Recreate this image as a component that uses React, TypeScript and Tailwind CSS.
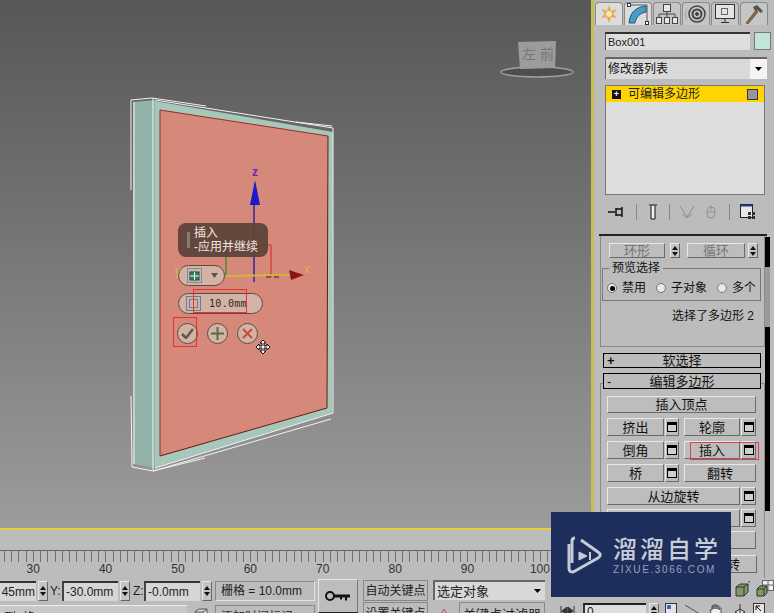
import React from "react";

const cjk = { fontFamily: '"Liberation Sans", "Noto Sans CJK SC", sans-serif' };

function Scene() {
  return (
    <svg className="absolute inset-0" width="591" height="529" viewBox="0 0 591 529">
      {/* side + rim */}
      <polygon points="133,102 155,100 155,468 133,464" fill="#93b3a8" />
      <polygon points="155,101 333,132 332,413 155,468" fill="#a6c7b9" />
      <polygon points="160,110 328,136 327,408 160,456" fill="#d6897a" />
      <polyline points="160,456 160,110 328,136" fill="none" stroke="#9c2c20" strokeWidth="1" />
      <polyline points="328,136 327,408 160,456" fill="none" stroke="#5e1e14" strokeWidth="1" />
      {/* selection outline */}
      <g fill="none" stroke="#f2f2f2" strokeWidth="1">
        <polyline points="131,190 131,100 152,98 206,106" />
        <line x1="134" y1="102" x2="134" y2="464" />
        <line x1="153" y1="98" x2="153" y2="470" />
        <polyline points="155,100 333,128 333,413 155,468" />
        <polyline points="131,396 132,467 153,471 205,458" />
        <polyline points="153,471 331,419" />
        <line x1="296" y1="122" x2="332" y2="126" />
      </g>
      {/* gizmo */}
      <line x1="254" y1="205" x2="254" y2="282" stroke="#2a2a8c" strokeWidth="1.5" />
      <polygon points="255,180 250,205 260,205" fill="#1a1ac8" />
      <polyline points="232,245 271,245 271,277" fill="none" stroke="#d62020" />
      <line x1="226" y1="250" x2="226" y2="276" stroke="#4f8a3a" strokeWidth="1.5" />
      <line x1="180" y1="275" x2="226" y2="275" stroke="#5aa88c" strokeWidth="2" />
      <line x1="226" y1="276" x2="290" y2="275" stroke="#d8b040" strokeWidth="2" />
      <polygon points="304,275 289,270 291,280" fill="#8c1414" />
      <path d="M266 277h5M274 277h5" stroke="#222" />
      {/* viewcube */}
      <ellipse cx="537" cy="72" rx="36" ry="5" fill="#4e4e4e" stroke="#a0a0a0" strokeWidth="1.500" />
      <polygon points="518,42 556,41 555,68 520,69" fill="#9c9c9c" />
      {/* move cursor */}
      <g stroke="#111" fill="#fff" strokeWidth="1">
        <path d="M263 340l3 3h-2v3h3v-2l3 3-3 3v-2h-3v3h2l-3 3-3-3h2v-3h-3v2l-3-3 3-3v2h3v-3h-2z" />
      </g>
    </svg>
  );
}

function Caddy() {
  return (
    <>
      <span className="absolute left-[252px] top-[166px] text-[12px] font-bold leading-none text-[#6a2ab0]">z</span>
      <span className="absolute left-[304px] top-[263px] text-[12px] leading-none text-[#e0b050]">x</span>
      <span className="absolute left-[175px] top-[265px] text-[12px] leading-none text-[#d8c050]">y</span>
      <span className="absolute left-[522px] top-[47px] text-[14px] leading-none text-[#767676]" style={cjk}>左</span>
      <span className="absolute left-[540px] top-[47px] text-[14px] leading-none text-[#767676]" style={cjk}>前</span>

      <div className="absolute left-[178px] top-[223px] flex h-[34px] w-[90px] items-center rounded-lg bg-[#5e433a]/95 pl-[9px]">
        <div className="mr-[4px] h-[16px] w-[3px] bg-[#8a7a72]" />
        <div className="text-[12px] leading-[14px] text-[#f0e8e0]" style={cjk}>
          <div>插入</div>
          <div>-应用并继续</div>
        </div>
      </div>

      <div className="absolute left-[178px] top-[265px] flex h-[21px] w-[47px] items-center gap-[9px] rounded-full border border-[#5e4a40] bg-[#d3b3a5] pl-[8px]">
        <svg width="15" height="15" viewBox="0 0 15 15">
          <rect x="0.5" y="0.5" width="14" height="14" fill="none" stroke="#7a8ca8" />
          <rect x="3" y="4" width="9" height="8" fill="#3f7f66" stroke="#244" />
          <path d="M7.5 4v8M3 8h9" stroke="#dfe" />
        </svg>
        <svg width="7" height="5" viewBox="0 0 7 5"><path d="M0 0h7L3.500 5z" fill="#5c5048" /></svg>
      </div>

      <div className="absolute left-[178px] top-[293px] flex h-[21px] w-[85px] items-center rounded-full border border-[#5e4a40] bg-[#d3b3a5] pl-[7px]">
        <svg width="15" height="15" viewBox="0 0 15 15">
          <rect x="0.500" y="0.500" width="14" height="14" fill="none" stroke="#6a7c98" />
          <rect x="3.500" y="3.500" width="8" height="8" fill="none" stroke="#6a7c98" />
        </svg>
        <span className="ml-[8px] text-[10px] leading-none tracking-[0.3px] text-[#2a2a2a]" style={{ fontFamily: '"DejaVu Sans Mono", monospace' }}>10.0mm</span>
      </div>

      <div className="absolute left-[177px] top-[323px] flex gap-[9px]">
        <div className="flex h-[21px] w-[21px] items-center justify-center rounded-full border border-[#5e4a40] bg-[#d3b3a5]">
          <svg width="13" height="11" viewBox="0 0 13 11"><path d="M1 6l4 4 7-9" fill="none" stroke="#5c5a48" strokeWidth="2.500" /></svg>
        </div>
        <div className="flex h-[21px] w-[21px] items-center justify-center rounded-full border border-[#5e4a40] bg-[#d3b3a5]">
          <svg width="13" height="13" viewBox="0 0 13 13"><path d="M6.500 0v13M0 6.500h13" stroke="#5a6a48" strokeWidth="2" /></svg>
        </div>
        <div className="flex h-[21px] w-[21px] items-center justify-center rounded-full border border-[#5e4a40] bg-[#d3b3a5]">
          <svg width="11" height="11" viewBox="0 0 11 11"><path d="M1 1l9 9M10 1l-9 9" stroke="#c84a3c" strokeWidth="2" /></svg>
        </div>
      </div>

      <div className="absolute left-[193px] top-[289px] h-[24px] w-[54px] border border-[#e8302c]" />
      <div className="absolute left-[173px] top-[317px] h-[30px] w-[24px] border border-[#e8302c]" />
    </>
  );
}

function TabIcon({ i }: { i: number }) {
  if (i === 0)
    return (
      <svg width="20" height="20" viewBox="0 0 20 20">
        <path d="M10 1l2 6 6-2-4 5 4 4-6-1-2 6-2-6-6 1 4-4-4-5 6 2z" fill="#e8a848" />
        <circle cx="10" cy="10" r="3" fill="#fbe9b0" />
      </svg>
    );
  if (i === 1)
    return (
      <svg width="22" height="22" viewBox="0 0 22 22">
        <path d="M2 20C3 9 9 4 19 3v6C13 10 9 14 8 20z" fill="#4a9cc8" stroke="#1d5a80" />
        <path d="M2 2h18v18" fill="none" stroke="#555" />
        <rect x="0.500" y="0.500" width="3" height="3" fill="#fff" stroke="#333" />
        <rect x="18.500" y="18.500" width="3" height="3" fill="#fff" stroke="#333" />
      </svg>
    );
  if (i === 2)
    return (
      <svg width="22" height="20" viewBox="0 0 22 20" fill="#e8e8e8" stroke="#444">
        <rect x="7.500" y="0.500" width="7" height="7" />
        <rect x="0.500" y="13.500" width="5" height="6" />
        <rect x="8.500" y="13.500" width="5" height="6" />
        <rect x="16.500" y="13.500" width="5" height="6" />
        <path d="M11 8v5M3 13v-3h16v3" fill="none" />
      </svg>
    );
  if (i === 3)
    return (
      <svg width="22" height="20" viewBox="0 0 22 20" fill="none" stroke="#444">
        <circle cx="12" cy="10" r="8" strokeWidth="1.500" />
        <circle cx="12" cy="10" r="4.500" strokeWidth="2" />
        <circle cx="12" cy="10" r="1.500" fill="#444" />
        <path d="M2 5c-2 3-2 7 0 10" stroke="#999" />
      </svg>
    );
  if (i === 4)
    return (
      <svg width="22" height="20" viewBox="0 0 22 20" fill="none" stroke="#333">
        <rect x="1.500" y="0.500" width="19" height="14" fill="#e4e4e4" />
        <rect x="7.500" y="4.500" width="6" height="6" stroke="#666" />
        <path d="M7 18.500h8M11 15v3" />
      </svg>
    );
  return (
    <svg width="20" height="20" viewBox="0 0 20 20">
      <path d="M2 19L12 6l2 2L4 20z" fill="#8a6a48" stroke="#333" strokeWidth="0.500" />
      <path d="M9 3l4-2 6 6-2 2-4-3-2 1z" fill="#555" />
    </svg>
  );
}

function Raised({ children, className = "" }: { children?: React.ReactNode; className?: string }) {
  return (
    <div
      className={`flex items-center justify-center border border-t-[#e8e8e8] border-l-[#e8e8e8] border-r-[#6a6a6a] border-b-[#6a6a6a] bg-[#bdbdbd] text-[13px] leading-none text-[#111] ${className}`}
      style={cjk}
    >
      {children}
    </div>
  );
}

function Square({ narrow }: { narrow?: boolean }) {
  return (
    <Raised className={narrow ? "h-[18px] w-[14px]" : "h-[18px] w-[15px]"}>
      <div className="h-[10px] w-[10px] border border-t-[3px] border-black bg-[#d0d0d0]" />
    </Raised>
  );
}

function Spinner({ h = "h-[20px]" }: { h?: string }) {
  return (
    <div className={`flex w-[10px] flex-col items-center justify-center gap-[2px] border border-t-[#e8e8e8] border-l-[#e8e8e8] border-r-[#666] border-b-[#666] bg-[#c4c4c4] ${h}`}>
      <svg width="6" height="4" viewBox="0 0 6 4"><path d="M3 0l3 4H0z" fill="#111" /></svg>
      <svg width="6" height="4" viewBox="0 0 6 4"><path d="M0 0h6L3 4z" fill="#111" /></svg>
    </div>
  );
}

function Panel() {
  return (
    <div className="flex h-[578px] w-[183px] shrink-0 flex-col overflow-hidden border-l-[3px] border-l-[#c9bd4e] bg-[#bcbcbc]" style={cjk}>
      <div className="flex h-[25px] gap-[1px] pl-[1px] pt-[2px]">
        {[0, 1, 2, 3, 4, 5].map((i) => (
          <div key={i} className={`flex h-[23px] w-[28px] items-center justify-center rounded-t-[4px] border border-b-0 border-[#8a8a8a] ${i < 2 ? "bg-[#dcdcdc]" : "bg-[#c6c6c6]"}`}>
            <TabIcon i={i} />
          </div>
        ))}
      </div>
      <div className="mt-[7px] flex gap-[4px] pl-[11px]">
        <div className="flex h-[18px] w-[145px] items-center border-t-2 border-l border-t-[#333] border-l-[#555] bg-[#dedede] pl-[2px] text-[11px] text-[#222]">Box001</div>
        <div className="h-[18px] w-[17px] border border-[#777] bg-[#bfe6d6]" />
      </div>
      <div className="ml-[11px] mt-[7px] flex h-[22px] w-[162px] items-center justify-between border-t-2 border-l border-t-[#666] border-l-[#666] bg-[#d9d9d9] pl-[2px] text-[12px] text-[#111]">
        修改器列表
        <div className="flex h-full w-[17px] items-center justify-center bg-[#f4f4f4]">
          <svg width="7" height="4" viewBox="0 0 7 4"><path d="M0 0h7L3.500 4z" fill="#000" /></svg>
        </div>
      </div>
      <div className="ml-[11px] mt-[6px] h-[110px] w-[160px] border border-[#777] bg-[#dedede]">
        <div className="flex h-[16px] items-center bg-[#ffd400] pl-[6px] pr-[6px] text-[12px] leading-none text-[#222]">
          <div className="flex h-[9px] w-[9px] items-center justify-center bg-[#111] text-[9px] font-bold leading-none text-white">+</div>
          <span className="ml-[7px]">可编辑多边形</span>
          <div className="ml-auto h-[11px] w-[11px] border border-[#333] bg-[#9a94a0]" />
        </div>
      </div>
      <div className="ml-[11px] mt-[6px] flex h-[22px] w-[160px] items-center">
        <svg className="ml-[3px]" width="18" height="14" viewBox="0 0 18 14">
          <path d="M0 7h7M8 3v8M8 4h6v6H8M14 2v10" fill="none" stroke="#111" strokeWidth="1.500" />
        </svg>
        <div className="ml-[10px] h-[16px] w-px bg-[#888]" />
        <svg className="ml-[11px]" width="10" height="16" viewBox="0 0 10 16">
          <path d="M1 1h8M3 2v13h4V2" fill="#eee" stroke="#111" />
        </svg>
        <div className="ml-[11px] h-[16px] w-px bg-[#888]" />
        <svg className="ml-[9px]" width="16" height="14" viewBox="0 0 16 14">
          <path d="M1 1l7 11 7-11M3 9l5 4 5-4" fill="none" stroke="#8f8f8f" />
        </svg>
        <svg className="ml-[11px]" width="10" height="14" viewBox="0 0 10 14">
          <rect x="1" y="2" width="8" height="11" rx="4" fill="none" stroke="#8f8f8f" />
          <path d="M1 7h8M5 0v5" stroke="#8f8f8f" />
        </svg>
        <div className="ml-[13px] h-[16px] w-px bg-[#888]" />
        <svg className="ml-[10px]" width="16" height="16" viewBox="0 0 16 16">
          <rect x="0.500" y="0.500" width="12" height="13" fill="#e8e8e8" stroke="#222" />
          <rect x="0.500" y="0.500" width="12" height="2" fill="#1b3a90" />
          <rect x="8" y="8" width="3" height="3" fill="#333" />
          <rect x="12" y="8" width="3" height="3" fill="#333" />
          <rect x="8" y="12" width="3" height="3" fill="#333" />
          <rect x="12" y="12" width="3" height="3" fill="#333" />
        </svg>
      </div>
      <div className="ml-[5px] mt-[11px] h-[2px] w-[168px] bg-[#222]" />

      <div className="relative flex flex-1 overflow-hidden">
        <div className="w-[171px] shrink-0 pl-[6px]">
          {/* upper rollout, scrolled so the ring / loop row is cut off */}
          <div className="h-[111px] w-[165px] border-x border-b border-[#8a8a8a]">
            <div className="flex items-center pl-[8px] pt-[7px]">
              <Raised className="h-[15px] w-[56px] text-[#777]">环形</Raised>
              <div className="ml-[5px]"><Spinner h="h-[15px]" /></div>
              <Raised className="ml-[7px] h-[15px] w-[58px] text-[#777]">循环</Raised>
              <div className="ml-[3px]"><Spinner h="h-[15px]" /></div>
            </div>
            <div className="relative ml-[1px] mt-[10px] h-[33px] w-[159px] border border-[#777]">
              <span className="absolute -top-[9px] left-[6px] bg-[#bcbcbc] px-[3px] text-[12px] leading-[16px] text-[#111]">预览选择</span>
              <div className="flex h-full items-center pl-[4px] pt-[7px] text-[12px] leading-none text-[#111]">
                <div className="flex h-[10px] w-[10px] items-center justify-center rounded-full border border-[#777] bg-[#e8e8e8]"><div className="h-[5px] w-[5px] rounded-full bg-black" /></div>
                <span className="ml-[5px]">禁用</span>
                <div className="ml-[10px] h-[10px] w-[10px] rounded-full border border-[#777] bg-[#e8e8e8]" />
                <span className="ml-[5px]">子对象</span>
                <div className="ml-[10px] h-[10px] w-[10px] rounded-full border border-[#777] bg-[#e8e8e8]" />
                <span className="ml-[5px]">多个</span>
              </div>
            </div>
            <div className="mt-[7px] pr-[10px] text-right text-[12px] leading-[16px] text-[#111]">选择了多边形 2</div>
          </div>
          <div className="ml-[3px] mt-[6px] flex h-[15px] w-[158px] items-center border border-black bg-[#bcbcbc] text-[13px] leading-none text-[#111]">
            <span className="w-[14px] pl-[3px] font-bold">+</span>
            <span className="flex-1 pr-[14px] text-center">软选择</span>
          </div>
          <div className="relative z-10 ml-[3px] mt-[5px] flex h-[16px] w-[158px] items-center border border-black bg-[#bcbcbc] text-[13px] leading-none text-[#111]">
            <span className="w-[14px] pl-[3px]">-</span>
            <span className="flex-1 pr-[14px] text-center">编辑多边形</span>
          </div>
          <div className="-mt-[6px] h-[260px] w-[165px] border border-[#8a8a8a] pl-[6px] pt-[12px]">
            <Raised className="h-[17px] w-[149px]">插入顶点</Raised>
            <div className="mt-[5px] flex gap-[5px]">
              <div className="flex gap-[1px]"><Raised className="h-[18px] w-[57px]">挤出</Raised><Square narrow /></div>
              <div className="flex gap-[1px]"><Raised className="h-[18px] w-[56px]">轮廓</Raised><Square /></div>
            </div>
            <div className="mt-[5px] flex gap-[5px]">
              <div className="flex gap-[1px]"><Raised className="h-[18px] w-[57px]">倒角</Raised><Square narrow /></div>
              <div className="flex gap-[1px]"><Raised className="h-[18px] w-[56px]">插入</Raised><Square /></div>
            </div>
            <div className="mt-[5px] flex gap-[5px]">
              <div className="flex gap-[1px]"><Raised className="h-[18px] w-[57px]">桥</Raised><Square narrow /></div>
              <Raised className="h-[18px] w-[72px]">翻转</Raised>
            </div>
            <div className="mt-[5px] flex gap-[1px]"><Raised className="h-[18px] w-[133px]">从边旋转</Raised><Square /></div>
            <div className="mt-[4px] flex gap-[1px]"><Raised className="h-[18px] w-[133px]" /><Square /></div>
            <Raised className="mt-[4px] h-[18px] w-[149px]" />
            <div className="mt-[6px] flex gap-[5px]">
              <Raised className="h-[18px] w-[72px]" />
              <Raised className="h-[18px] w-[73px] !justify-end pr-[16px]">旋转</Raised>
            </div>
          </div>
        </div>
        <div className="mt-[1px] flex h-[274px] w-[5px] flex-col bg-black">
          <div className="mt-[30px] h-[60px] bg-[#9a9a9a]" />
        </div>
        <div className="absolute left-[96px] top-[206px] h-[18px] w-[69px] border border-[#e0404c]" />
      </div>
    </div>
  );
}

function Timeline() {
  return (
    <div className="h-[48px] bg-[#bcbcbc] pt-[20px]">
      <div
        className="h-[12px] border-t border-t-[#666]"
        style={{ backgroundImage: "repeating-linear-gradient(to right, #707070 0 1px, transparent 1px 7.24px)", backgroundPosition: "4px 0" }}
      />
      <div className="-ml-[3px] flex text-[12px] leading-[14px] text-[#333]" style={{ fontFamily: '"Liberation Sans", sans-serif' }}>
        {[30, 40, 50, 60, 70, 80, 90, 100].map((n) => (
          <div key={n} className="w-[72.4px] shrink-0 text-center">{n}</div>
        ))}
      </div>
    </div>
  );
}

function Field({ value }: { value: string }) {
  return (
    <div className="flex h-[20px] w-[56px] items-center border-t-2 border-l-2 border-t-[#333] border-l-[#444] bg-[#d6d6d6] pl-[2px] text-[12px] text-[#222]">{value}</div>
  );
}

function StatusBar() {
  return (
    <div className="flex h-[35px] overflow-hidden bg-[#bcbcbc] text-[#222]" style={cjk}>
      <div className="w-[317px] shrink-0">
        <div className="mt-[3px] flex items-center text-[12px]">
          <div className="flex h-[20px] w-[36px] items-center justify-end border-t-2 border-t-[#333] bg-[#d6d6d6] pr-[1px]">45mm</div>
          <div className="ml-[2px]"><Spinner /></div>
          <span className="ml-[2px] w-[12px]">Y:</span>
          <Field value="-30.0mm" />
          <div className="ml-[2px]"><Spinner /></div>
          <span className="ml-[3px] w-[11px]">Z:</span>
          <Field value="-0.0mm" />
          <div className="ml-[2px]"><Spinner /></div>
          <div className="ml-[3px] flex h-[20px] w-[100px] items-center border border-t-[#888] border-l-[#888] border-r-[#e4e4e4] border-b-[#e4e4e4] pl-[5px]">栅格 = 10.0mm</div>
        </div>
        <div className="mt-[4px] flex h-[24px] items-start">
          <div className="flex h-[24px] w-[187px] items-center border-t border-t-[#eee] bg-[#c8c8c8] pl-[4px] text-[12px] leading-none">到1格</div>
          <svg className="ml-[7px] mt-[3px]" width="14" height="12" viewBox="0 0 14 12"><path d="M1 4l4-3h8v6l-4 4H1zM1 4h8v7M9 4l4-3" fill="#ddd" stroke="#555" /></svg>
          <div className="ml-[7px] flex h-[24px] w-[100px] items-center border border-[#888] pl-[5px] text-[12px] leading-none text-[#333]">添加时间标记</div>
        </div>
      </div>
      <div className="ml-[1px] mt-[1px] flex h-[34px] w-[40px] shrink-0 items-center justify-center border border-t-[#e8e8e8] border-l-[#e8e8e8] border-r-[#777] bg-[#bdbdbd]">
        <svg width="26" height="12" viewBox="0 0 26 12"><circle cx="5" cy="6" r="4" fill="none" stroke="#111" strokeWidth="2" /><path d="M9 4.500h16v3h-3v3h-2v-3h-3v2h-2v-2H9z" fill="#111" /></svg>
      </div>
      <div className="ml-[5px] mt-[2px] w-[65px] shrink-0 whitespace-nowrap text-[12px] leading-none">
        <div className="flex h-[21px] items-center justify-center border border-[#888]">自动关键点</div>
        <div className="mt-[1px] flex h-[24px] items-center justify-center border border-[#888]">设置关键点</div>
      </div>
      <div className="ml-[5px] mt-[2px] w-[112px] shrink-0 whitespace-nowrap text-[12px] leading-none">
        <div className="flex h-[20px] items-center justify-between border-t-2 border-l-2 border-t-[#666] border-l-[#666] bg-[#d8d8d8] pl-[2px] pr-[4px] text-[13px]">
          选定对象
          <svg width="7" height="4" viewBox="0 0 7 4"><path d="M0 0h7L3.500 4z" fill="#000" /></svg>
        </div>
        <div className="mt-[2px] flex h-[24px] items-center">
          <svg className="ml-[4px]" width="14" height="12" viewBox="0 0 14 12"><path d="M7 1l6 10H1zM3 8h8" fill="none" stroke="#b05a50" /></svg>
          <div className="ml-[8px] flex h-full flex-1 items-center border border-[#888] pl-[3px] text-[13px]">关键点过滤器</div>
        </div>
      </div>
      <div className="ml-[5px] w-[229px] shrink-0">
        <div className="flex h-[22px] items-center justify-end gap-[6px] pr-[5px]">
          <svg width="15" height="16" viewBox="0 0 15 16"><path d="M1 6l4-3h8v8l-4 4H1zM1 6h8v9M9 6l4-3" fill="#7f9a66" stroke="#333" /><path d="M13 0h2v2" fill="none" stroke="#333" /></svg>
          <svg width="18" height="18" viewBox="0 0 18 18"><rect x="6.500" y="0.500" width="11" height="10" fill="#efefef" stroke="#666" /><path d="M12 0v11M6 5h12" stroke="#666" /><path d="M1 9l3-3h7v7l-3 3H1zM1 9h7v7M8 9l3-3" fill="#7f9a66" stroke="#333" /></svg>
        </div>
        <div className="mt-[3px] flex h-[16px] items-start">
          <svg className="ml-[10px] mt-[3px]" width="15" height="10" viewBox="0 0 15 10"><path d="M1 0v10M14 0v10M2 5l5-4v8zM13 5L8 1v8z" fill="#333" stroke="#333" /></svg>
          <div className="ml-[8px] h-[16px] w-[63px] border-t-2 border-l-2 border-t-[#222] border-l-[#333] bg-[#dedede] pl-[2px] text-[12px] leading-[14px]">0</div>
          <div className="ml-[3px]"><Spinner h="h-[16px]" /></div>
          <svg className="ml-[6px]" width="15" height="13" viewBox="0 0 15 13"><rect x="0.500" y="0.500" width="11" height="11" fill="#dfe4ec" stroke="#334" /><rect x="2" y="2" width="4" height="4" fill="#4a6a9a" /></svg>
          <svg className="ml-[5px] mt-[1px]" width="15" height="12" viewBox="0 0 15 12"><path d="M0 1l15 9" stroke="#555" /></svg>
          <svg className="ml-[9px]" width="14" height="14" viewBox="0 0 14 14"><path d="M3 13L1 7h2V3h1v3-4h2v4-4h2v4-3h2v4-2h2v5l-2 5z" fill="#eee" stroke="#333" strokeWidth="0.800" /></svg>
          <svg className="ml-[10px]" width="14" height="14" viewBox="0 0 14 14"><path d="M7 1v12M2 9l5-3 5 3-5 3z" fill="#ddd" stroke="#333" /></svg>
          <svg className="ml-[6px]" width="12" height="13" viewBox="0 0 12 13"><rect x="0.500" y="0.500" width="11" height="12" fill="#e4e4e4" stroke="#333" /><path d="M3 3l5 5M3 3h4M3 3v4" stroke="#111" /></svg>
        </div>
      </div>
    </div>
  );
}

function Watermark() {
  return (
    <div className="absolute left-[551px] top-[512px] flex h-[85px] w-[180px] items-center bg-[#1e2e5c] pl-[15px]">
      <svg width="36" height="38" viewBox="0 0 36 38" fill="none" stroke="#c4cad6" strokeWidth="3" strokeLinejoin="round">
        <path d="M3 8v24c0 4 3 5 6 3l23-13c3-2 3-4 0-6L15 4" />
        <path d="M9 2c-2 0-3 1-3 3v22" />
        <path d="M13 16l8 4-8 4z" fill="#c4cad6" strokeWidth="1" />
        <path d="M24 16v8" strokeWidth="2" />
      </svg>
      <div className="ml-[11px]">
        <div className="text-[24px] font-medium leading-[30px] tracking-[3px] text-[#c8cdd8]" style={{ fontFamily: '"Noto Sans CJK SC", sans-serif' }}>溜溜自学</div>
        <div className="mt-[1px] text-[10px] leading-[12px] tracking-[1.6px] text-[#97a1ba]" style={{ fontFamily: '"Liberation Sans", sans-serif' }}>ZIXUE.3066.COM</div>
      </div>
    </div>
  );
}

export default function App() {
  return (
    <div className="relative h-[613px] w-[774px] overflow-hidden bg-[#bcbcbc]" style={cjk}>
      <div className="flex">
        <div className="w-[591px] shrink-0">
          <div className="relative h-[530px] border-b-[2px] border-b-[#e8cf3c] bg-gradient-to-b from-[#575757] to-[#9c9c9c]">
            <Scene />
            <Caddy />
          </div>
          <Timeline />
        </div>
        <Panel />
      </div>
      <StatusBar />
      <Watermark />
    </div>
  );
}
